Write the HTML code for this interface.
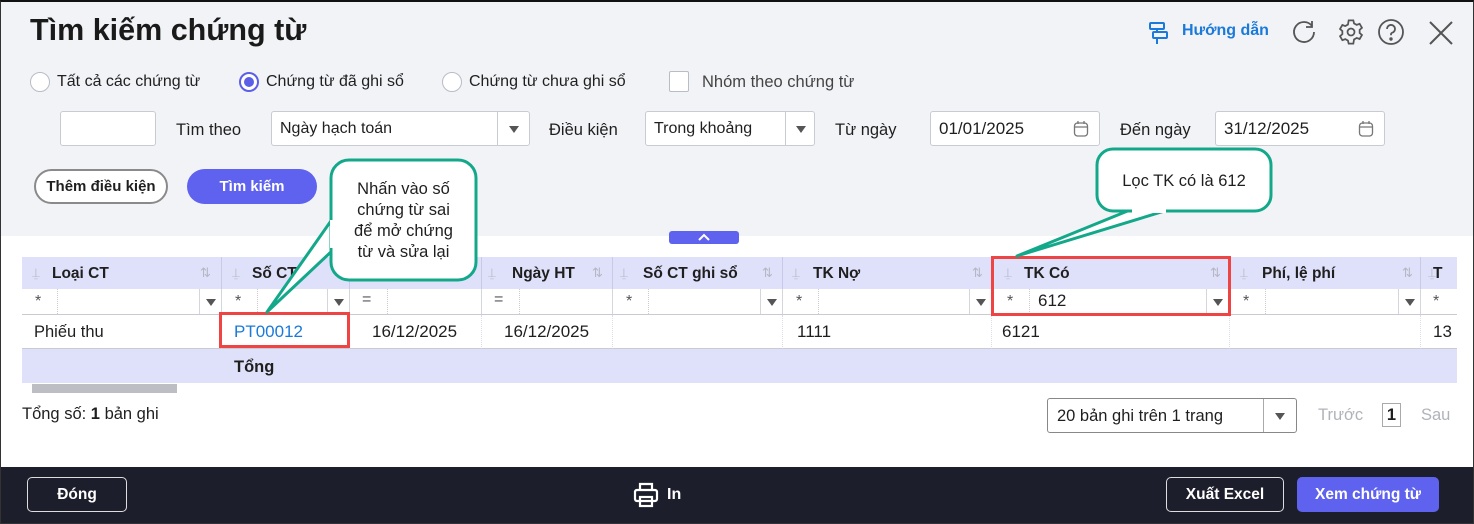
<!DOCTYPE html>
<html><head><meta charset="utf-8"><style>
*{box-sizing:border-box;margin:0;padding:0}
body{width:1474px;height:524px;position:relative;overflow:hidden;font-family:"Liberation Sans",Arial,sans-serif;background:#fff;color:#1f1f1f;font-size:16px}
.a{position:absolute;white-space:nowrap}
.top{position:absolute;left:0;top:0;width:1474px;height:236px;background:#f2f3f7}
.radio{position:absolute;width:20px;height:20px;border-radius:50%;border:1px solid #b8bcc6;background:#fff}
.inp{position:absolute;height:35px;border:1px solid #c8cbd2;background:#fff;border-radius:3px}
.tri{position:absolute;width:0;height:0;border-left:5px solid transparent;border-right:5px solid transparent;border-top:7px solid #555}
.hd{position:absolute;top:257px;height:32px;background:#dfe0fa;border-right:1px solid #c9cbe6;font-weight:bold;font-size:15.5px;line-height:33px}
.fl{position:absolute;top:289px;height:26px;border-bottom:1px solid #c9cbd2;border-right:1px solid #d4d6dc;background:#fff}
.dl{position:absolute;top:315px;height:34px;border-bottom:1px solid #c9cbd2;border-right:1px dotted #dcdde2;line-height:34px;font-size:16.5px}
.btn{position:absolute;border-radius:5px;color:#fff;font-weight:bold;font-size:15.5px;text-align:center}
.num{font-size:17px}
</style></head><body>
<div class="top"></div>
<div class="a" style="left:30px;top:13px;font-size:30.5px;font-weight:bold;color:#1a1a1a">Tìm kiếm chứng từ</div>
<svg class="a" style="left:1146px;top:20px" width="26" height="26" viewBox="0 0 26 26" fill="none" stroke="#1a7ad9" stroke-width="2"><rect x="4" y="3" width="14" height="6" rx="1"/><rect x="7" y="12" width="14" height="6" rx="1"/><path d="M11 9v3M11 18v6"/></svg>
<div class="a" style="left:1182px;top:22px;color:#1a7ad9;font-weight:bold;font-size:16px">Hướng dẫn</div>
<svg class="a" style="left:1290px;top:18px" width="28" height="28" viewBox="0 0 28 28" fill="none" stroke="#555" stroke-width="1.8"><path d="M22 8A10 10 0 1 0 24 14"/><path d="M22 3v6h-6"/></svg>
<svg class="a" style="left:1337px;top:18px" width="28" height="28" viewBox="0 0 24 24" fill="none" stroke="#555" stroke-width="1.5"><circle cx="12" cy="12" r="3"/><path d="M10 2h4l.6 2.6 2.3 1.3 2.5-.9 2 3.4-2 1.8v2.6l2 1.8-2 3.4-2.5-.9-2.3 1.3L14 22h-4l-.6-2.6-2.3-1.3-2.5.9-2-3.4 2-1.8v-2.6l-2-1.8 2-3.4 2.5.9 2.3-1.3z"/></svg>
<svg class="a" style="left:1377px;top:18px" width="28" height="28" viewBox="0 0 28 28" fill="none" stroke="#555" stroke-width="1.8"><circle cx="14" cy="14" r="12"/><path d="M10 11a4 4 0 1 1 5 3.8c-1 .4-1 1-1 2.5"/><circle cx="14" cy="21" r=".8" fill="#555"/></svg>
<svg class="a" style="left:1428px;top:20px" width="26" height="26" viewBox="0 0 26 26" stroke="#555" stroke-width="2"><path d="M2 2l22 22M24 2L2 24"/></svg>
<div class="radio" style="left:30px;top:72px"></div><div class="a" style="left:57px;top:73px">Tất cả các chứng từ</div>
<div class="radio" style="left:239px;top:72px;border:2px solid #5b5fe8"><div style="position:absolute;left:3px;top:3px;width:10px;height:10px;border-radius:50%;background:#5b5fe8"></div></div><div class="a" style="left:266px;top:73px">Chứng từ đã ghi sổ</div>
<div class="radio" style="left:442px;top:72px"></div><div class="a" style="left:469px;top:73px">Chứng từ chưa ghi sổ</div>
<div class="a" style="left:669px;top:71px;width:20px;height:21px;border:1px solid #b8bcc6;background:#fff;border-radius:2px"></div><div class="a" style="left:702px;top:73px;color:#444;font-size:16.5px">Nhóm theo chứng từ</div>
<div class="inp" style="left:60px;top:111px;width:96px"></div>
<div class="a" style="left:176px;top:121px;font-size:16.5px">Tìm theo</div>
<div class="inp" style="left:271px;top:111px;width:259px"><span class="a" style="left:8px;top:8px">Ngày hạch toán</span><div style="position:absolute;left:225px;top:0;height:33px;border-left:1px solid #c8cbd2"></div><div class="tri" style="left:237px;top:14px"></div></div>
<div class="a" style="left:549px;top:121px;font-size:16.5px">Điều kiện</div>
<div class="inp" style="left:645px;top:111px;width:170px"><span class="a" style="left:8px;top:8px">Trong khoảng</span><div style="position:absolute;left:139px;top:0;height:33px;border-left:1px solid #c8cbd2"></div><div class="tri" style="left:150px;top:14px"></div></div>
<div class="a" style="left:835px;top:121px;font-size:16.5px">Từ ngày</div>
<div class="inp" style="left:930px;top:111px;width:170px"><span class="a num" style="left:8px;top:7px">01/01/2025</span><svg class="a" style="left:142px;top:8px" width="16" height="18" viewBox="0 0 16 18" fill="none" stroke="#777" stroke-width="1.3"><rect x="1.5" y="3" width="13" height="13" rx="3"/><path d="M5 1v3M11 1v3M1.5 7h13"/></svg></div>
<div class="a" style="left:1120px;top:121px;font-size:16.5px">Đến ngày</div>
<div class="inp" style="left:1215px;top:111px;width:170px"><span class="a num" style="left:8px;top:7px">31/12/2025</span><svg class="a" style="left:142px;top:8px" width="16" height="18" viewBox="0 0 16 18" fill="none" stroke="#777" stroke-width="1.3"><rect x="1.5" y="3" width="13" height="13" rx="3"/><path d="M5 1v3M11 1v3M1.5 7h13"/></svg></div>
<div class="a" style="left:34px;top:169px;width:134px;height:35px;border:2px solid #8a8a8a;border-radius:18px;background:#fff;text-align:center;line-height:31px;font-weight:bold;font-size:15px">Thêm điều kiện</div>
<div class="a" style="left:187px;top:169px;width:130px;height:35px;border-radius:18px;background:#5e62ee;color:#fff;text-align:center;line-height:35px;font-weight:bold;font-size:15px">Tìm kiếm</div>
<div class="a" style="left:669px;top:231px;width:70px;height:13px;background:#5e62ee;border-radius:3px"><svg style="position:absolute;left:29px;top:2px" width="12" height="8" viewBox="0 0 12 8" fill="none" stroke="#fff" stroke-width="2"><path d="M1 7l5-5 5 5"/></svg></div>
<div class="hd" style="left:22px;width:200px"><span class="a" style="left:30px">Loại CT</span></div>
<div class="hd" style="left:222px;width:128px"><span class="a" style="left:30px">Số CT</span></div>
<div class="hd" style="left:350px;width:132px"></div>
<div class="hd" style="left:482px;width:131px"><span class="a" style="left:30px">Ngày HT</span></div>
<div class="hd" style="left:613px;width:170px"><span class="a" style="left:30px">Số CT ghi sổ</span></div>
<div class="hd" style="left:783px;width:209px"><span class="a" style="left:30px">TK Nợ</span></div>
<div class="hd" style="left:992px;width:238px"><span class="a" style="left:32px">TK Có</span></div>
<div class="hd" style="left:1230px;width:191px"><span class="a" style="left:32px">Phí, lệ phí</span></div>
<div class="hd" style="left:1421px;width:36px;border-right:0"><span class="a" style="left:12px">T</span></div>
<div class="a" style="left:22px;top:257px;width:1435px;height:32px;color:#b5b7c4;font-size:13px;line-height:32px">
<span class="a" style="left:10px">⍊</span><span class="a" style="left:178px">⇅</span><span class="a" style="left:210px">⍊</span><span class="a" style="left:466px">⍊</span><span class="a" style="left:570px">⇅</span><span class="a" style="left:598px">⍊</span><span class="a" style="left:740px">⇅</span><span class="a" style="left:770px">⍊</span><span class="a" style="left:950px">⇅</span><span class="a" style="left:982px">⍊</span><span class="a" style="left:1188px">⇅</span><span class="a" style="left:1218px">⍊</span><span class="a" style="left:1380px">⇅</span><span class="a" style="left:1406px">⍊</span>
</div>
<div class="fl" style="left:22px;width:200px"><span class="a" style="left:13px;top:4px;color:#555">*</span><div class="a" style="left:35px;top:0;height:25px;border-left:1px dotted #ccc"></div><div class="a" style="left:177px;top:0;height:25px;border-left:1px solid #d4d6dc"></div><div class="tri" style="left:184px;top:10px"></div></div>
<div class="fl" style="left:222px;width:128px"><span class="a" style="left:13px;top:4px;color:#555">*</span><div class="a" style="left:35px;top:0;height:25px;border-left:1px dotted #ccc"></div><div class="a" style="left:105px;top:0;height:25px;border-left:1px solid #d4d6dc"></div><div class="tri" style="left:112px;top:10px"></div></div>
<div class="fl" style="left:350px;width:132px"><span class="a" style="left:12px;top:2px;color:#555">=</span><div class="a" style="left:37px;top:0;height:25px;border-left:1px dotted #ccc"></div></div>
<div class="fl" style="left:482px;width:131px"><span class="a" style="left:12px;top:2px;color:#555">=</span><div class="a" style="left:37px;top:0;height:25px;border-left:1px dotted #ccc"></div></div>
<div class="fl" style="left:613px;width:170px"><span class="a" style="left:13px;top:4px;color:#555">*</span><div class="a" style="left:35px;top:0;height:25px;border-left:1px dotted #ccc"></div><div class="a" style="left:147px;top:0;height:25px;border-left:1px solid #d4d6dc"></div><div class="tri" style="left:154px;top:10px"></div></div>
<div class="fl" style="left:783px;width:209px"><span class="a" style="left:13px;top:4px;color:#555">*</span><div class="a" style="left:35px;top:0;height:25px;border-left:1px dotted #ccc"></div><div class="a" style="left:186px;top:0;height:25px;border-left:1px solid #d4d6dc"></div><div class="tri" style="left:193px;top:10px"></div></div>
<div class="fl" style="left:992px;width:238px"><span class="a" style="left:15px;top:4px;color:#555">*</span><div class="a" style="left:37px;top:0;height:25px;border-left:1px dotted #ccc"></div><span class="a num" style="left:46px;top:2px">612</span><div class="a" style="left:214px;top:0;height:25px;border-left:1px solid #d4d6dc"></div><div class="tri" style="left:221px;top:10px"></div></div>
<div class="fl" style="left:1230px;width:191px"><span class="a" style="left:13px;top:4px;color:#555">*</span><div class="a" style="left:35px;top:0;height:25px;border-left:1px dotted #ccc"></div><div class="a" style="left:168px;top:0;height:25px;border-left:1px solid #d4d6dc"></div><div class="tri" style="left:175px;top:10px"></div></div>
<div class="fl" style="left:1421px;width:36px;border-right:0"><span class="a" style="left:12px;top:4px;color:#555">*</span></div>
<div class="dl" style="left:22px;width:200px"><span class="a" style="left:12px">Phiếu thu</span></div>
<div class="dl" style="left:222px;width:128px"><span class="a num" style="left:12px;color:#1a7ad9">PT00012</span></div>
<div class="dl" style="left:350px;width:132px"><span class="a num" style="left:22px">16/12/2025</span></div>
<div class="dl" style="left:482px;width:131px"><span class="a num" style="left:22px">16/12/2025</span></div>
<div class="dl" style="left:613px;width:170px"></div>
<div class="dl" style="left:783px;width:209px"><span class="a num" style="left:14px">1111</span></div>
<div class="dl" style="left:992px;width:238px"><span class="a num" style="left:10px">6121</span></div>
<div class="dl" style="left:1230px;width:191px"></div>
<div class="dl" style="left:1421px;width:36px;border-right:0"><span class="a num" style="left:12px">13</span></div>
<div class="a" style="left:22px;top:349px;width:1435px;height:34px;background:#dfe0fa"><span class="a" style="left:212px;top:9px;font-weight:bold;font-size:16.5px">Tổng</span></div>
<div class="a" style="left:32px;top:384px;width:145px;height:9px;background:#bcbec4"></div>
<div class="a" style="left:219px;top:312px;width:131px;height:36px;border:3px solid #ef4444"></div>
<div class="a" style="left:991px;top:256px;width:240px;height:60px;border:3px solid #ef4444"></div>
<svg class="a" style="left:0;top:0" width="1474" height="330" viewBox="0 0 1474 330">
<path d="M333 218 L267 312 L333 250 Z" fill="#fff" stroke="#14a88a" stroke-width="3" stroke-linejoin="round"/>
<rect x="331" y="160" width="145" height="120" rx="18" fill="#fff" stroke="#14a88a" stroke-width="3"/>
<path d="M1130 210 L1017 256 L1168 210 Z" fill="#fff" stroke="#14a88a" stroke-width="3" stroke-linejoin="round"/>
<rect x="1097" y="149" width="174" height="62" rx="16" fill="#fff" stroke="#14a88a" stroke-width="3"/>
<path d="M1132 211 L1166 211" stroke="#fff" stroke-width="4"/>
<path d="M332 220 L332 248" stroke="#fff" stroke-width="4"/>
</svg>
<div class="a" style="left:346px;top:179px;width:115px;text-align:center;font-size:16.5px;line-height:21px;white-space:normal">Nhấn vào số chứng từ sai để mở chứng từ và sửa lại</div>
<div class="a" style="left:1097px;top:172px;width:174px;text-align:center;font-size:16.5px">Lọc TK có là 612</div>
<div class="a" style="left:22px;top:405px;font-size:16.5px">Tổng số: <b>1</b> bản ghi</div>
<div class="a" style="left:1047px;top:398px;width:250px;height:35px;border:1px solid #888;border-radius:3px"><span class="a" style="left:9px;top:8px;font-size:16.5px">20 bản ghi trên 1 trang</span><div class="a" style="left:215px;top:0;height:33px;border-left:1px solid #aaa"></div><div class="tri" style="left:227px;top:14px"></div></div>
<div class="a" style="left:1318px;top:406px;color:#b0b3ba;font-size:16.5px">Trước</div>
<div class="a" style="left:1382px;top:403px;width:19px;height:24px;border:1px solid #aaa;text-align:center;line-height:22px;font-weight:bold;font-size:16.5px">1</div>
<div class="a" style="left:1421px;top:406px;color:#b0b3ba;font-size:16.5px">Sau</div>
<div class="a" style="left:0;top:467px;width:1474px;height:57px;background:#1c1e2b"></div>
<div class="btn" style="left:27px;top:477px;width:100px;height:35px;border:1px solid #ddd;line-height:33px">Đóng</div>
<svg class="a" style="left:632px;top:481px" width="28" height="28" viewBox="0 0 28 28" fill="none" stroke="#fff" stroke-width="2.2"><path d="M8 9V3h12v6"/><rect x="3" y="9" width="22" height="11" rx="2"/><rect x="8" y="16" width="12" height="9"/></svg>
<div class="a" style="left:667px;top:486px;color:#fff;font-weight:bold">In</div>
<div class="btn" style="left:1166px;top:477px;width:118px;height:35px;border:1px solid #ddd;line-height:33px">Xuất Excel</div>
<div class="btn" style="left:1297px;top:477px;width:142px;height:35px;background:#5e62ee;line-height:35px">Xem chứng từ</div>
<div class="a" style="left:0;top:0;width:1474px;height:524px;border:1px solid #333;border-top:2px solid #111;pointer-events:none"></div>
</body></html>
